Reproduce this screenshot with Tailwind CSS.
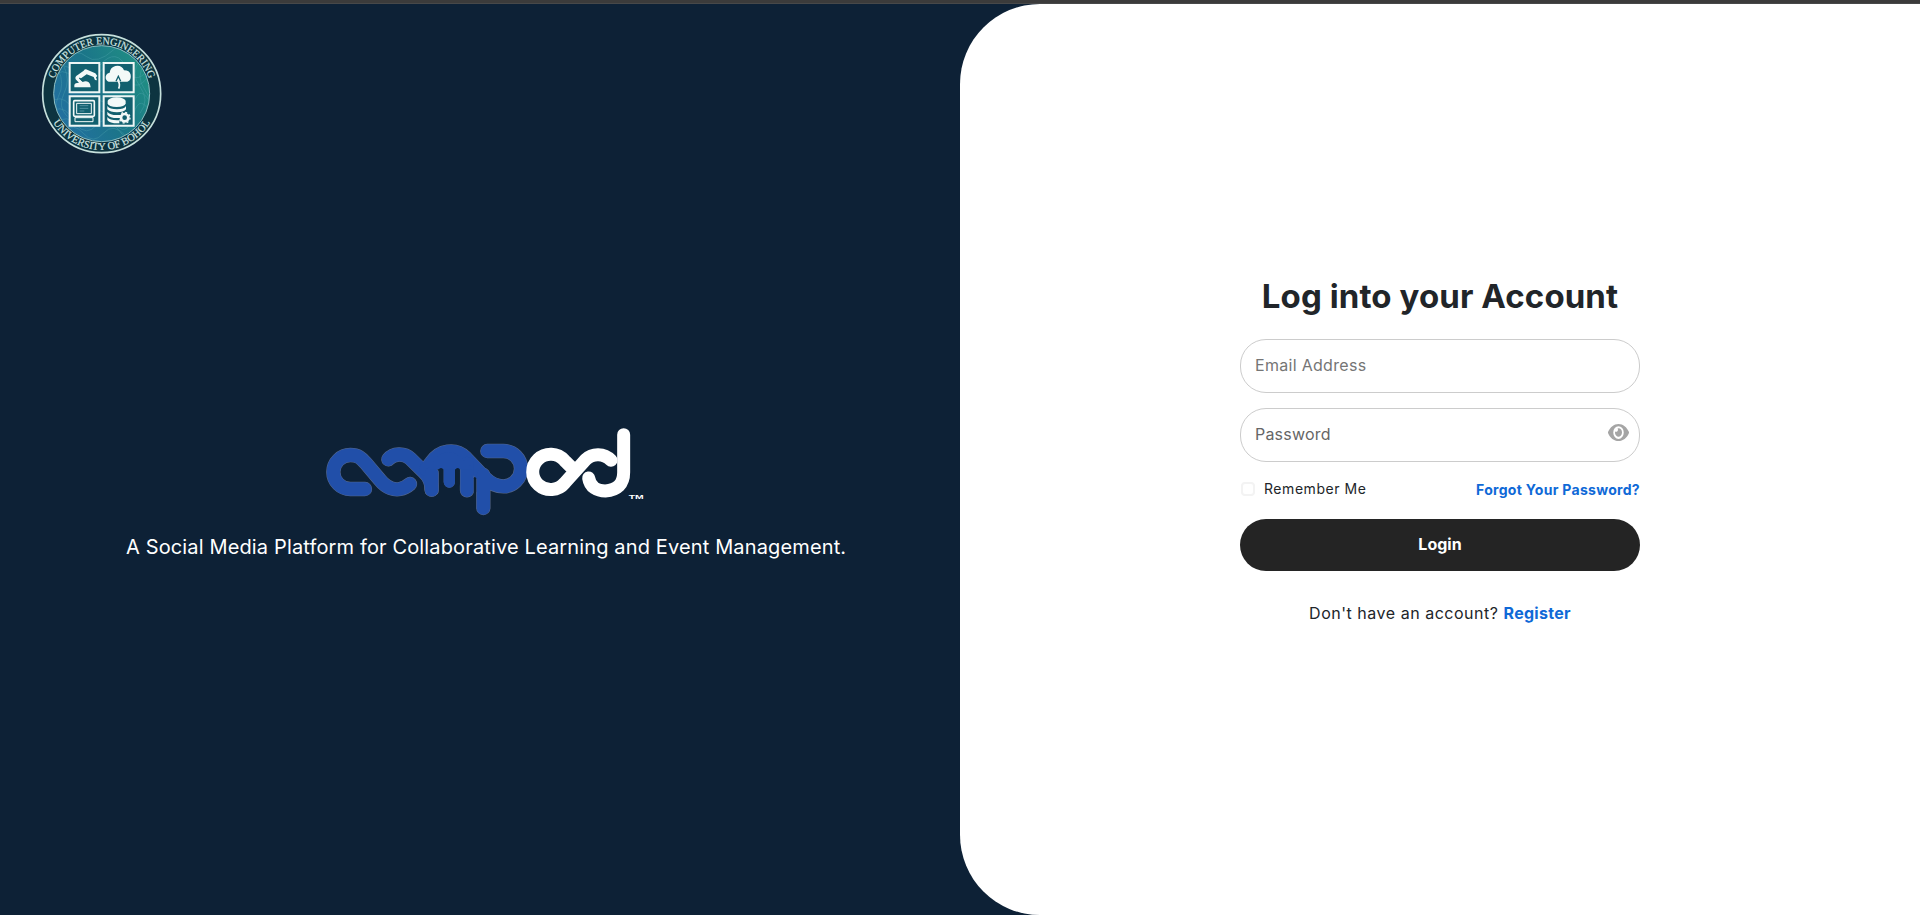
<!DOCTYPE html>
<html lang="en">
<head>
<meta charset="utf-8">
<title>Compod - Login</title>
<script src="https://cdn.jsdelivr.net/npm/@tailwindcss/browser@4"></script>
</head>
<body class="h-screen overflow-hidden bg-[#0d2136] font-['Inter',sans-serif] text-[#212529] flex flex-col">
<div class="h-1 shrink-0 border-b border-[#474849] bg-[#3b3b3b]"></div>
<main class="grid grid-cols-2 flex-1 min-h-0">
  <section class="flex flex-col">
    <svg class="ml-[30px] mt-4 w-[145px] h-[145px] shrink-0" viewBox="0 0 435 435" role="img" aria-label="Computer Engineering, University of Bohol">
      <defs>
        <linearGradient id="sea" x1="0" y1=".75" x2="1" y2=".25"><stop offset="0" stop-color="#2370a2"/><stop offset=".5" stop-color="#1b7589"/><stop offset="1" stop-color="#209083"/></linearGradient>
        <clipPath id="disc"><circle cx="215" cy="221" r="144"/></clipPath>
        <path id="upper" d="M67 221a148 148 0 0 1 296 0"/>
        <path id="lower" d="M46 221a169 169 0 0 0 338 0"/>
      </defs>
      <circle cx="215" cy="221" r="177" fill="#0d3440" stroke="#c6e0dc" stroke-width="5"/>
      <circle cx="215" cy="221" r="144" fill="url(#sea)" stroke="#8ebfc2" stroke-width="3"/>
      <g clip-path="url(#disc)" fill="none" stroke="#57aab5" stroke-opacity=".5" stroke-width="2">
        <path d="M60 150q40-30 70 5t80-20 80 10 80-20M60 175q40-40 70 0t80-20 80 10 80-20M100 110q40-25 70 0t80-20 80 20M60 250q30-30 60 5t60 0 70 20 60-20 60 10M60 280q30-30 60 5t60 0 70 20 60-20 60 10M80 310q30-30 60 5t60 0 70 20 60-20M100 335q30-30 60 5t60 0 70 10 60-20M330 120q-30 40 0 80t0 80M345 130q-30 40 0 80t0 80M85 150q20 40 0 80t10 70M102 140q20 40 0 80t10 70"/>
      </g>
      <g fill="#d3e8e5" font-family="Liberation Serif, serif" font-size="32" stroke="#d3e8e5" stroke-width=".5">
        <text text-anchor="middle" textLength="374" lengthAdjust="spacingAndGlyphs"><textPath href="#upper" startOffset="50%">COMPUTER ENGINEERING</textPath></text>
        <text text-anchor="middle" textLength="350" lengthAdjust="spacingAndGlyphs"><textPath href="#lower" startOffset="50%">UNIVERSITY OF BOHOL</textPath></text>
      </g>
      <g fill="#12606f" stroke="#edf6f5" stroke-width="6"><path d="M119 129h89v88h-89zM221 129h90v88h-90zM119 229h89v88h-89zM221 229h90v88h-90z"/></g>
      <g fill="#f3f9f8">
        <path d="M133 202v-7q2-7 14-7l-10-10q-3-8 5-12l19-14q5-7 12-2l23 10 6 8-4 4 3 9-6-1-4-9-21-8-20 14 8 9q10-5 18 1 5 3 6 15z"/>
        <path d="M236 185q-10-4-9-15 2-10 12-12 2-16 17-20 19-4 26 13 17 0 20 13 3 16-10 21z"/>
        <path d="M233 243a27 11 0 0 1 54 0v7a27 11 0 0 1-54 0z"/>
      </g>
      <path d="M148 174l10 9M258 184l7-15 7 15" fill="none" stroke="#12606f" stroke-width="4"/>
      <path d="M265 184q6 9 1 22" fill="none" stroke="#f3f9f8" stroke-width="5"/>
      <g fill="none" stroke="#f3f9f8" stroke-width="5"><rect x="131" y="242" width="62" height="47" rx="3"/><path d="M140 250h44v31h-44zM135 293h54v12h-54z" stroke-width="3"/><path d="M149 257h26M149 265h26M149 273h14" stroke-width="2" stroke="#72aaba"/></g>
      <path d="M232 258q7 10 29 10t27-10v10q-6 9-27 9t-29-9zM232 275q7 10 29 10t27-10v9q-6 10-27 10t-29-10zM232 291q7 10 29 10h7v9q-29 1-36-10z" fill="#f3f9f8"/>
      <circle cx="284" cy="293" r="11" fill="#12606f" stroke="#f3f9f8" stroke-width="8"/>
      <circle cx="284" cy="293" r="16" fill="none" stroke="#f3f9f8" stroke-width="4" stroke-dasharray="6 6.5"/>
    </svg>
    <svg class="ml-[310px] mt-[245px] w-[350px] h-[120px] shrink-0" viewBox="0 0 1050 360" role="img" aria-label="compod">
      <defs>
        <g id="comp" fill="none" stroke-linecap="round" stroke-linejoin="round">
          <path d="M165 237H121A51 51 0 0 1 121 135C145 135 154 145 166 158L210 210C230 235 254 240 270 237Q286 234 300 222"/>
          <path d="M235 148C250 130 282 128 301 146L340 184Q365 206 365 239"/>
          <path d="M348 178L364 157C389 120 436 113 466 142L526 205Q550 229 580 229A53 53 0 0 0 580 123H532"/>
          <path d="M520 195V294M471 160V241M365 190V239"/>
          <path d="M418 160V216" class="[stroke-width:34px]"/>
        </g>
      </defs>
      <use href="#comp" stroke="#56688c" stroke-width="43"/>
      <use href="#comp" stroke="#214fa9" stroke-width="40"/>
      <path d="M360 168L382 140Q417 112 450 140L486 170V178H360Z" fill="#214fa9"/>
      <g fill="none" stroke="#0d2136" stroke-linecap="round"><path d="M393 180V222" stroke-width="12"/><path d="M443 180V222" stroke-width="12"/><path d="M495 205V245" stroke-width="7"/></g>
      <g fill="none" stroke="#fff" stroke-width="39" stroke-linecap="round" stroke-linejoin="round">
        <path d="M903 151C882 129 847 129 827 149L764 219A54 53 0 1 1 763 151L785 173"/>
        <path d="M836 204C840 232 862 243 886 243Q941 239 941 187V74"/>
      </g>
      <text x="956" y="268" fill="#fff" font-family="Liberation Sans, sans-serif" font-weight="700" font-size="18" textLength="45" lengthAdjust="spacingAndGlyphs">TM</text>
    </svg>
    <p class="ml-[126px] mt-[5px] text-[20px] leading-[24px] tracking-[0.14px] text-white whitespace-nowrap">A Social Media Platform for Collaborative Learning and Event Management.</p>
  </section>
  <section class="rounded-l-[80px] bg-white flex justify-center">
    <form class="mt-[273px] w-[400px] flex flex-col">
      <h1 class="text-center text-[33px] leading-[38px] font-bold tracking-[0.1px] whitespace-nowrap">Log into your Account</h1>
      <input type="email" placeholder="Email Address" aria-label="Email Address" class="mt-[24px] h-[54px] w-full rounded-[26px] border border-[#ccc] pl-[14px] pr-4 pb-0.5 text-base tracking-[0.3px] placeholder:text-[#757575]">
      <div class="mt-[15px] h-[54px] flex items-center rounded-[26px] border border-[#ccc] pl-[14px] pr-[10px] pb-0.5">
        <input type="password" placeholder="Password" aria-label="Password" class="flex-1 text-base tracking-[0.2px] placeholder:text-[#666]">
        <svg class="w-[21px] h-[17px] -mt-[3px]" viewBox="0 64 576 384" preserveAspectRatio="none" fill="#a5a5a5"><path d="M572.5 241.400C518.300 135.600 410.900 64 288 64S57.700 135.600 3.500 241.400a32.400 32.400 0 0 0 0 29.200C57.700 376.400 165.100 448 288 448s230.300-71.600 284.500-177.400a32.400 32.400 0 0 0 0-29.200zM288 400a144 144 0 1 1 144-144 143.900 143.900 0 0 1-144 144zm0-240a95.300 95.300 0 0 0-25.300 3.800 47.900 47.900 0 0 1-66.900 66.900A95.800 95.800 0 1 0 288 160z"/></svg>
      </div>
      <div class="mt-[17px] h-5 flex items-center justify-between text-sm leading-5">
        <label class="flex items-center tracking-[0.55px] whitespace-nowrap"><input type="checkbox" class="appearance-none ml-px mr-[9px] size-[14px] rounded-[4px] border-2 border-[#f3f3f3]">Remember Me</label>
        <a href="#" class="mt-0.5 font-bold tracking-[0.3px] text-[#0f69d7] whitespace-nowrap">Forgot Your Password?</a>
      </div>
      <button type="button" class="mt-5 h-[52px] rounded-[26px] bg-[#242424] pb-0.5 text-base font-bold text-white">Login</button>
      <p class="mt-[30px] text-center text-base leading-6 tracking-[0.52px] whitespace-nowrap">Don't have an account? <a href="#" class="font-bold tracking-[0.3px] text-[#0f69d7]">Register</a></p>
    </form>
  </section>
</main>
</body>
</html>
